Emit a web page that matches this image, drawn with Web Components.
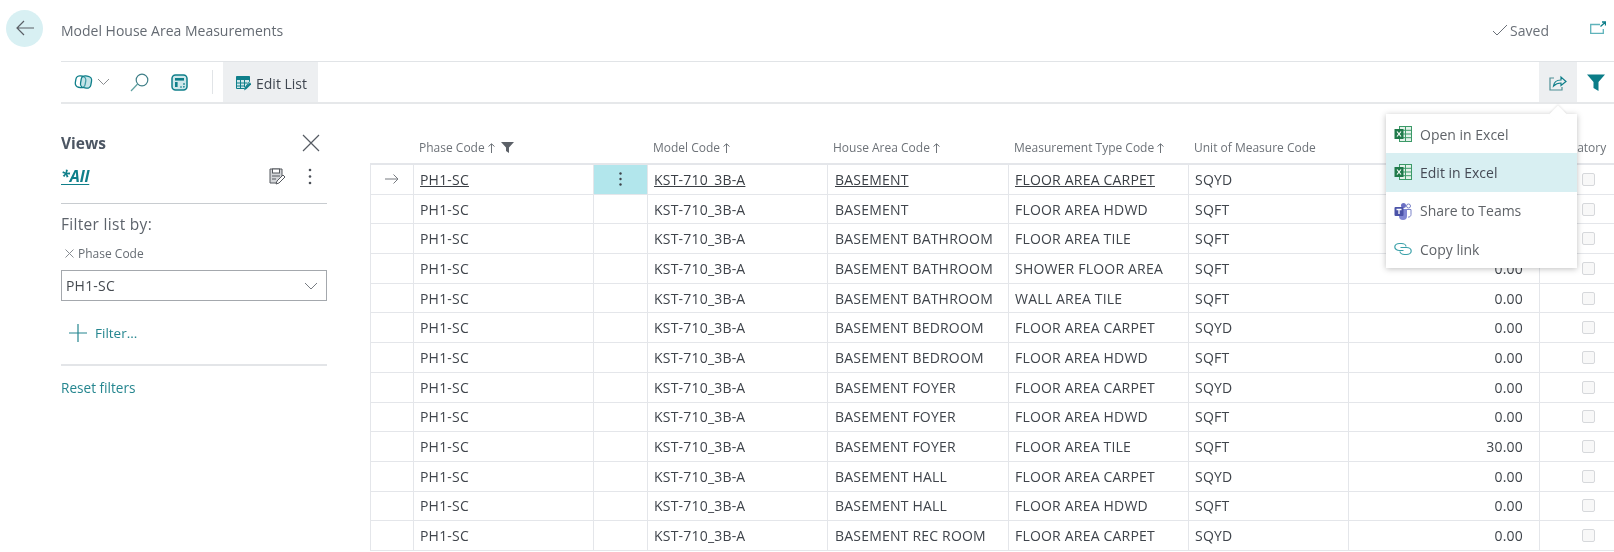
<!DOCTYPE html>
<html lang="en">
<head>
<meta charset="utf-8">
<title>Model House Area Measurements</title>
<style>
html, body { margin: 0; height: 100%; background: #fff; overflow: hidden; }
body { font-family: "Open Sans", "Liberation Sans", sans-serif; font-size: 13px; color: #3d3d3d; }
</style>
</head>
<body>
<bc-page>
	<bc-views slot="views"></bc-views>
	<bc-grid slot="grid">
		<bc-row current area="BASEMENT" type="FLOOR AREA CARPET" unit="SQYD" qty=""></bc-row>
		<bc-row area="BASEMENT" type="FLOOR AREA HDWD" unit="SQFT" qty=""></bc-row>
		<bc-row area="BASEMENT BATHROOM" type="FLOOR AREA TILE" unit="SQFT" qty=""></bc-row>
		<bc-row area="BASEMENT BATHROOM" type="SHOWER FLOOR AREA" unit="SQFT" qty="0.00"></bc-row>
		<bc-row area="BASEMENT BATHROOM" type="WALL AREA TILE" unit="SQFT" qty="0.00"></bc-row>
		<bc-row area="BASEMENT BEDROOM" type="FLOOR AREA CARPET" unit="SQYD" qty="0.00"></bc-row>
		<bc-row area="BASEMENT BEDROOM" type="FLOOR AREA HDWD" unit="SQFT" qty="0.00"></bc-row>
		<bc-row area="BASEMENT FOYER" type="FLOOR AREA CARPET" unit="SQYD" qty="0.00"></bc-row>
		<bc-row area="BASEMENT FOYER" type="FLOOR AREA HDWD" unit="SQFT" qty="0.00"></bc-row>
		<bc-row area="BASEMENT FOYER" type="FLOOR AREA TILE" unit="SQFT" qty="30.00"></bc-row>
		<bc-row area="BASEMENT HALL" type="FLOOR AREA CARPET" unit="SQYD" qty="0.00"></bc-row>
		<bc-row area="BASEMENT HALL" type="FLOOR AREA HDWD" unit="SQFT" qty="0.00"></bc-row>
		<bc-row area="BASEMENT REC ROOM" type="FLOOR AREA CARPET" unit="SQYD" qty="0.00"></bc-row>
	</bc-grid>
</bc-page>
<script>
const TEAL = '#0f7f8a'
const COLUMNS = '44px 180px 54px 180px 181px 180px 160px 191px 75px'

const excelIcon = /* html */ `
	<svg width="18" height="18" viewBox="0 0 18 18">
		<rect x="5.500" y="1.500" width="12" height="15" fill="#e4f2ea" stroke="#3c9a68" stroke-width="1"/>
		<path d="M5.500 5.300h12M5.500 9h12M5.500 12.700h12M11.500 1.500v15" stroke="#3c9a68" stroke-width="1" fill="none"/>
		<rect x="0.500" y="4" width="9" height="10" fill="#1f7a4a"/>
		<path d="M3 6.500l4 5M7 6.500l-4 5" stroke="#fff" stroke-width="1.200"/>
	</svg>`

class BcPage extends HTMLElement {
	constructor() {
		super()
		this.attachShadow({ mode: 'open' })
	}

	static get styles() {
		return /* css */ `
    :host { display: block; position: relative; width: 1614px; height: 552px; overflow: hidden; filter: blur(0.3px); }
    .head { display: flex; align-items: center; height: 61px; }
    .back {
      width: 37px;
      height: 37px;
      margin: 0 18px 5px 6px;
      border-radius: 50%;
      background: #d8f0f3;
      display: flex;
      align-items: center;
      justify-content: center;
    }
    .title { flex: 1; color: #656b73; font-size: 14px; margin-bottom: 1px; }
    .saved { display: flex; align-items: center; gap: 2px; color: #6a7078; font-size: 14px; margin: 0 41px 1px 0; }
    .popout { margin: 0 8px 6px 0; }
    .body { margin-left: 61px; }
    .main { display: flex; }
    bc-share-menu { position: absolute; left: 1386px; top: 114px; }
    svg { display: block; }
    ::slotted(bc-views) { flex: none; }
    `
	}

	connectedCallback() {
		this.shadowRoot.innerHTML = /* html */ `
      <style>${BcPage.styles}</style>
      <div class="head">
        <div class="back">
          <svg width="20" height="16" viewBox="0 0 20 16" fill="none" stroke="#5a5f66" stroke-width="1.200"><path d="M19 8H2M9 1L2 8l7 7"/></svg>
        </div>
        <div class="title">Model House Area Measurements</div>
        <div class="saved">
          <svg width="16" height="12" viewBox="0 0 16 12" fill="none" stroke="#6a7078" stroke-width="1"><path d="M1 7l4 4L15 1"/></svg>
          Saved
        </div>
        <svg class="popout" width="16" height="13" viewBox="0 0 16 13" fill="none" stroke="#5fb3bb" stroke-width="1.300"><path d="M10 3.500H.7v9h12.600V8"/><path d="M10.500 5.500L15 1.500M12 1H15.500V4.500" stroke="${TEAL}"/></svg>
      </div>
      <div class="body">
        <bc-toolbar></bc-toolbar>
        <div class="main">
          <slot name="views"></slot>
          <slot name="grid"></slot>
        </div>
      </div>
      <bc-share-menu></bc-share-menu>
    `
	}
}

class BcToolbar extends HTMLElement {
	constructor() {
		super()
		this.attachShadow({ mode: 'open' })
	}

	static get styles() {
		return /* css */ `
    :host {
      display: flex;
      align-items: stretch;
      height: 40px;
      border-top: 1px solid #e1e4e7;
      border-bottom: 2px solid #e6e8ea;
      font-size: 14px;
    }
    .tool { display: flex; align-items: center; }
    .sep { width: 1px; height: 24px; background: #e1e4e7; align-self: center; margin: 0 10px 0 24px; }
    .edit { background: #edeff1; width: 95px; gap: 5px; padding-left: 13px; box-sizing: border-box; color: #3f4650; padding-top: 2px; }
    .grow { flex: 1; }
    .share { background: #edeff1; width: 38px; justify-content: center; }
    .filter { width: 37px; justify-content: center; }
    svg { display: block; }
    `
	}

	connectedCallback() {
		this.shadowRoot.innerHTML = /* html */ `
      <style>${BcToolbar.styles}</style>
      <div class="tool" style="padding-left:13px">
        <svg width="19" height="18" viewBox="0 0 19 18" fill="none" stroke="${TEAL}" stroke-width="1.300"><rect x="1.500" y="3" width="10" height="11.500" rx="4" transform="rotate(10 6.500 9)"/><rect x="6.800" y="3" width="10.500" height="12" rx="4" fill="#7cc4cb" fill-opacity=".45" transform="rotate(10 12 9)"/></svg>
        <svg style="margin-left:4px" width="13" height="8" viewBox="0 0 13 8" fill="none" stroke="#8a8d90" stroke-width="1"><path d="M1 1l5.500 5.500L12 1"/></svg>
      </div>
      <div class="tool" style="padding-left:20px">
        <svg width="19" height="19" viewBox="0 0 19 19" fill="none" stroke-width="1.200"><circle cx="12" cy="7" r="5.800" stroke="#3f7f88"/><path d="M7.600 11L1 18" stroke="#5fa0a0"/></svg>
      </div>
      <div class="tool" style="padding-left:22px">
        <svg width="17" height="17" viewBox="0 0 17 17" fill="none"><rect x="1" y="1" width="15" height="15" rx="3.500" fill="#cfe8eb" stroke="${TEAL}" stroke-width="1.500"/><rect x="4" y="4" width="9" height="2.600" fill="${TEAL}"/><rect x="4" y="8" width="2.600" height="5" fill="${TEAL}"/><path d="M9 13h4v-4" stroke="${TEAL}" stroke-width="1.200" stroke-dasharray="2 1"/></svg>
      </div>
      <div class="sep"></div>
      <div class="tool edit">
        <svg width="15" height="16" viewBox="0 0 15 16" fill="none"><path d="M.5 1.500h13v5l-5 7H.5z" fill="#d3e8ea" stroke="${TEAL}"/><path d="M.5 1.500h13V5H.5z" fill="${TEAL}"/><path d="M.5 8h11M.5 11h8M4.500 5v8.500M8.500 5v7" stroke="${TEAL}"/><path d="M8 15.500l1-3 5-5 1.500 1.500-5 5z" fill="${TEAL}"/></svg>
        Edit List
      </div>
      <div class="grow"></div>
      <div class="tool share">
        <svg width="18" height="17" viewBox="0 0 18 17" fill="none" stroke-width="1.200"><path d="M5 4H1v12h12v-3" stroke="#4f8f95"/><path d="M4.500 12c.5-4 3.500-6 7.500-6V3l5 4.500-5 4V9c-3 0-5.500 1-7.500 3z" stroke="${TEAL}"/></svg>
      </div>
      <div class="tool filter">
        <svg width="18" height="17" viewBox="0 0 18 17"><path d="M0 .5h18l-6.500 7.500v9l-5-3V8z" fill="#0b7d88"/></svg>
      </div>
    `
	}
}

class BcViews extends HTMLElement {
	constructor() {
		super()
		this.attachShadow({ mode: 'open' })
	}

	static get styles() {
		return /* css */ `
    :host { display: block; width: 266px; margin-right: 43px; color: #5d636b; }
    svg { display: block; }
    .top { display: flex; justify-content: space-between; align-items: center; height: 24px; margin-top: 27px; }
    .views { font-weight: 700; font-size: 15.500px; color: #4c5663; }
    .close { margin-right: 7px; }
    .all-row { display: flex; align-items: center; height: 26px; margin-top: 8px; padding-bottom: 14px; border-bottom: 1px solid #c8ccd0; }
    .all { flex: 1; font-weight: 700; font-style: italic; font-size: 16px; color: ${TEAL}; text-decoration: underline; text-underline-offset: 2px; }
    .tools { display: flex; gap: 22px; align-items: center; margin-right: 15px; }
    .by { font-size: 15.500px; letter-spacing: .3px; margin-top: 7px; height: 26px; line-height: 26px; }
    .field { display: flex; align-items: center; gap: 4px; font-size: 12px; height: 20px; margin-top: 6px; padding-left: 4px; color: #666c73; }
    .input {
      display: flex;
      align-items: center;
      justify-content: space-between;
      box-sizing: border-box;
      height: 31px;
      margin-top: 7px;
      padding: 0 8px 0 4px;
      border: 1px solid #a4a8ad;
      color: #454a50;
      font-size: 14px;
      letter-spacing: .2px;
    }
    .add { display: flex; align-items: center; gap: 8px; color: #25868f; height: 22px; margin-top: 21px; padding-left: 8px; font-size: 13.500px; }
    .rule { height: 0; border-bottom: 2px solid #e3e5e8; margin-top: 20px; }
    .reset { color: #25868f; font-size: 13.600px; margin-top: 12px; }
    `
	}

	connectedCallback() {
		this.shadowRoot.innerHTML = /* html */ `
      <style>${BcViews.styles}</style>
      <div class="top">
        <span class="views">Views</span>
        <svg class="close" width="18" height="18" viewBox="0 0 18 18" fill="none" stroke="#555b63" stroke-width="1.200"><path d="M1 1l16 16M17 1L1 17"/></svg>
      </div>
      <div class="all-row">
        <span class="all">*All</span>
        <div class="tools">
          <svg width="17" height="17" viewBox="0 0 17 17"><path d="M1 1h12v8l-5 6H1z" fill="#d4d6d9" stroke="#55595f"/><rect x="3.500" y="1" width="7" height="4" fill="#fff" stroke="#55595f"/><path d="M3 8h8M3 11h4" stroke="#55595f"/><path d="M7 16l1-3 6-6 2 2-6 6z" fill="#fff" stroke="#55595f"/></svg>
          <svg width="4" height="17" viewBox="0 0 4 17" fill="#4b5058"><circle cx="2" cy="2" r="1.300"/><circle cx="2" cy="8.500" r="1.300"/><circle cx="2" cy="15" r="1.300"/></svg>
        </div>
      </div>
      <div class="by">Filter list by:</div>
      <div class="field">
        <svg width="9" height="9" viewBox="0 0 9 9" fill="none" stroke="#888d93"><path d="M.5 .5l8 8M8.500 .5l-8 8"/></svg>
        Phase Code
      </div>
      <div class="input">
        PH1-SC
        <svg width="14" height="8" viewBox="0 0 14 8" fill="none" stroke="#777c82"><path d="M1 1l6 6 6-6"/></svg>
      </div>
      <div class="add">
        <svg width="18" height="18" viewBox="0 0 18 18" fill="none" stroke="#25868f" stroke-width="1.200"><path d="M9 0v18M0 9h18"/></svg>
        Filter...
      </div>
      <div class="rule"></div>
      <div class="reset">Reset filters</div>
    `
	}
}

class BcGrid extends HTMLElement {
	constructor() {
		super()
		this.attachShadow({ mode: 'open' })
	}

	static get styles() {
		return /* css */ `
    :host { display: block; width: 1245px; margin-top: 21px; }
    .cols {
      display: grid;
      grid-template-columns: ${COLUMNS};
      height: 38px;
      align-items: end;
      color: #6d7278;
      font-size: 12px;
      border-bottom: 2px solid #e4e6ea;
    }
    .cols div { display: flex; align-items: center; gap: 3px; padding-left: 5px; margin-bottom: 7px; white-space: nowrap; }
    svg { display: block; }
    `
	}

	connectedCallback() {
		const up = /* html */ `<svg width="7" height="10" viewBox="0 0 7 10" fill="none" stroke="#6d7278"><path d="M3.500 10V1M.5 3.500L3.500 .8l3 2.700"/></svg>`
		this.shadowRoot.innerHTML = /* html */ `
      <style>${BcGrid.styles}</style>
      <div class="cols">
        <div></div>
        <div>Phase Code ${up}
          <svg style="margin-left:3px" width="13" height="11" viewBox="0 0 13 11"><path d="M0 0h13L8 5.500V11L5 9V5.500z" fill="#5c6168"/></svg>
        </div>
        <div></div>
        <div>Model Code ${up}</div>
        <div>House Area Code ${up}</div>
        <div>Measurement Type Code ${up}</div>
        <div>Unit of Measure Code</div>
        <div></div>
        <div>Mandatory</div>
      </div>
      <slot></slot>
    `
	}
}

class BcRow extends HTMLElement {
	constructor() {
		super()
		this.attachShadow({ mode: 'open' })
	}

	static get styles() {
		return /* css */ `
    :host {
      display: grid;
      grid-template-columns: ${COLUMNS};
      height: 29.700px;
      box-sizing: border-box;
      border-bottom: 1px solid #e4e6ea;
      color: #3f444b;
      font-size: 14px;
      letter-spacing: .2px;
    }
    .c {
      display: flex;
      align-items: center;
      box-sizing: border-box;
      padding-left: 6px;
      border-right: 1px solid #e4e6ea;
      white-space: nowrap;
    }
    .first { border-left: 1px solid #e4e6ea; justify-content: center; padding: 0; }
    .menu { padding: 0; justify-content: center; }
    .area { padding-left: 7px; }
    .num { justify-content: flex-end; padding: 0 16px 0 0; }
    .check { justify-content: center; border: 0; padding: 0 0 0 21px; }
    .box { width: 11px; height: 11px; border: 1px solid #d6d8db; border-radius: 2px; background: #f8f8f8; }
    :host([current]) .menu { background: #b2e6ec; }
    :host([current]) .link { text-decoration: underline; text-underline-offset: 1px; color: #3a3f45; }
    svg { display: block; }
    `
	}

	connectedCallback() {
		const current = this.hasAttribute('current')
		const arrow = current ? /* html */ `<svg width="14" height="10" viewBox="0 0 14 10" fill="none" stroke="#777b80"><path d="M0 5h13M8.500 .5L13 5l-4.500 4.500"/></svg>` : ''
		const dots = current ? /* html */ `<svg width="3" height="14" viewBox="0 0 3 14" fill="#3f444b"><circle cx="1.500" cy="1.500" r="1.200"/><circle cx="1.500" cy="7" r="1.200"/><circle cx="1.500" cy="12.500" r="1.200"/></svg>` : ''
		this.shadowRoot.innerHTML = /* html */ `
      <style>${BcRow.styles}</style>
      <div class="c first">${arrow}</div>
      <div class="c"><span class="link">PH1-SC</span></div>
      <div class="c menu">${dots}</div>
      <div class="c"><span class="link">KST-710_3B-A</span></div>
      <div class="c area"><span class="link">${this.getAttribute('area')}</span></div>
      <div class="c"><span class="link">${this.getAttribute('type')}</span></div>
      <div class="c">${this.getAttribute('unit')}</div>
      <div class="c num">${this.getAttribute('qty')}</div>
      <div class="c check"><div class="box"></div></div>
    `
	}
}

class BcShareMenu extends HTMLElement {
	constructor() {
		super()
		this.attachShadow({ mode: 'open' })
	}

	static get styles() {
		return /* css */ `
    :host {
      display: block;
      width: 191px;
      padding-top: 1px;
      background: #fff;
      box-shadow: 0 1px 6px rgba(0, 0, 0, 0.25);
      color: #5f6368;
      font-size: 14px;
    }
    :host::before {
      content: '';
      position: absolute;
      left: 166px;
      top: -6px;
      width: 12px;
      height: 12px;
      background: #fff;
      transform: rotate(45deg);
      box-shadow: -1px -1px 2px rgba(0, 0, 0, 0.08);
    }
    .item { position: relative; display: flex; align-items: center; gap: 8px; height: 38.300px; padding-left: 8px; }
    .on { background: #d8eff2; color: #454a55; }
    svg { display: block; }
    `
	}

	connectedCallback() {
		this.shadowRoot.innerHTML = /* html */ `
      <style>${BcShareMenu.styles}</style>
      <div class="item">${excelIcon} Open in Excel</div>
      <div class="item on">${excelIcon} Edit in Excel</div>
      <div class="item">
        <svg width="18" height="18" viewBox="0 0 18 18"><circle cx="14.500" cy="4" r="2" fill="none" stroke="#7b83c9"/><path d="M12 7.500h5v5c0 2-2 3-3 2.500" fill="none" stroke="#7b83c9"/><circle cx="9.500" cy="3.500" r="2.500" fill="#6b70c4"/><path d="M5 7h8v7a4 4 0 0 1-8 0z" fill="#8288d4"/><rect x="0.500" y="5" width="9" height="9" rx="1" fill="#4b53a8"/><path d="M2.500 7.500h5M5 7.500V12" stroke="#fff" stroke-width="1.300"/></svg>
        Share to Teams
      </div>
      <div class="item">
        <svg width="18" height="18" viewBox="0 0 18 18" fill="none" stroke="#3aa0a9" stroke-width="1.200"><path d="M9.500 10.500H5.500C3 10.500 .8 9 .8 7s2.200-3.500 4.700-3.500h2c2.500 0 4.500 1.500 4.500 3"/><path d="M6.500 7.500h6c2.500 0 4.700 1.500 4.700 3.500s-2.200 3.500-4.700 3.500h-2C8 14.500 6 13 6 11.500"/></svg>
        Copy link
      </div>
    `
	}
}

customElements.define('bc-page', BcPage)
customElements.define('bc-toolbar', BcToolbar)
customElements.define('bc-views', BcViews)
customElements.define('bc-grid', BcGrid)
customElements.define('bc-row', BcRow)
customElements.define('bc-share-menu', BcShareMenu)
</script>
</body>
</html>
